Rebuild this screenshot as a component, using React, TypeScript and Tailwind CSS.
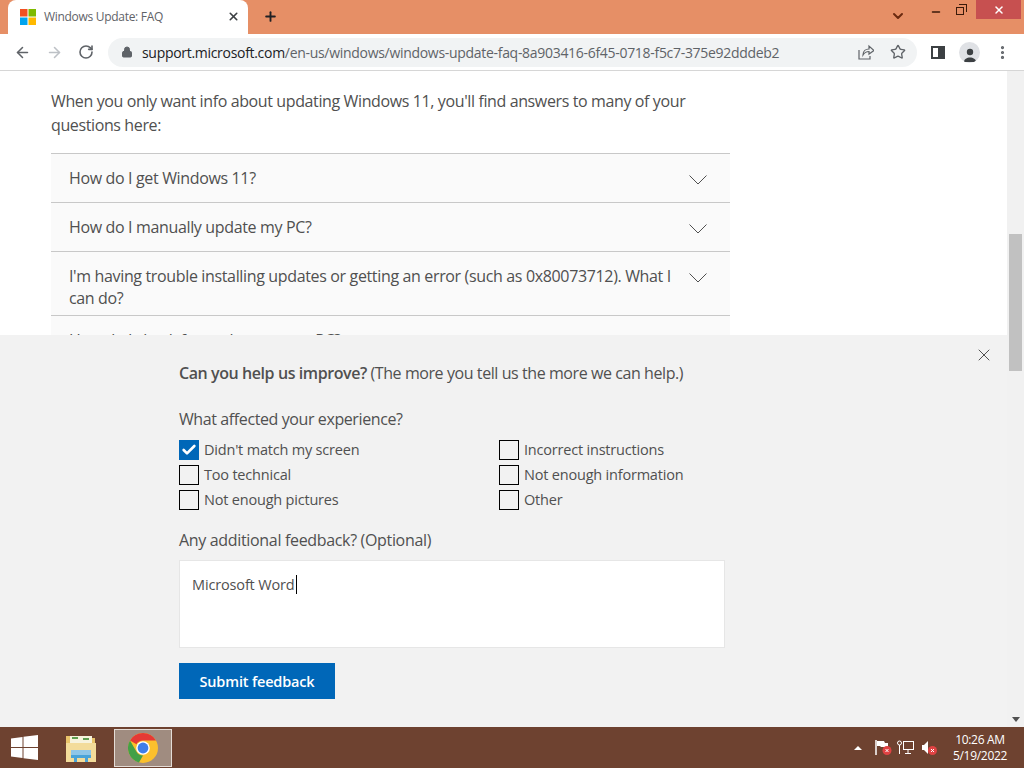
import { ArrowLeft, ArrowRight, RotateCw, Lock, Star, X, Plus, ChevronDown, MoreVertical, Check, Minus } from 'lucide-react';

const faqs = [
  "How do I get Windows 11?",
  "How do I manually update my PC?",
  "I'm having trouble installing updates or getting an error (such as 0x80073712). What I can do?",
  "How do I check for updates on my PC?",
];

const leftOptions = [
  { label: "Didn't match my screen", checked: true },
  { label: "Too technical", checked: false },
  { label: "Not enough pictures", checked: false },
];

const rightOptions = [
  { label: "Incorrect instructions", checked: false },
  { label: "Not enough information", checked: false },
  { label: "Other", checked: false },
];

const WinFlag = () => (
  <svg width="16" height="16" viewBox="0 0 16 16">
    <rect x="0" y="0" width="7.5" height="7.5" fill="#f25022" />
    <rect x="8.5" y="0" width="7.5" height="7.5" fill="#7fba00" />
    <rect x="0" y="8.5" width="7.5" height="7.5" fill="#00a4ef" />
    <rect x="8.5" y="8.5" width="7.5" height="7.5" fill="#ffb900" />
  </svg>
);

const Option = ({ label, checked }: { label: string; checked: boolean }) => (
  <div className="flex h-[25px] items-center gap-[5px]">
    {checked ? (
      <div className="flex h-5 w-5 items-center justify-center bg-[#0067b8]">
        <Check className="h-4 w-4 text-white" strokeWidth={4} />
      </div>
    ) : (
      <div className="h-5 w-5 border border-black" />
    )}
    <span className="text-[14.5px] tracking-[-0.2px] text-[#505050]">{label}</span>
  </div>
);

export default function App() {
  return (
    <div className="flex h-[768px] w-[1024px] flex-col overflow-hidden bg-white font-['Open_Sans',sans-serif]">
      {/* Tab strip */}
      <div className="flex h-[34px] shrink-0 items-end bg-[#e68f66] pl-2">
        <div className="flex h-[34px] w-[240px] items-center rounded-t-lg bg-white pl-3 pr-[8px] pb-[1px]">
          <WinFlag />
          <span className="ml-2 flex-1 text-[12px] tracking-[-0.3px] text-[#5f6368]">Windows Update: FAQ</span>
          <X className="h-[13px] w-[13px] text-[#3c4043]" strokeWidth={3} />
        </div>
        <Plus className="mb-[10px] ml-[15px] h-[15px] w-[15px] text-[#202124]" strokeWidth={3} />
        <div className="flex-1" />
        <ChevronDown className="mb-[10px] mr-[24px] h-[16px] w-[16px] text-[#6b2a10]" strokeWidth={3} />
        <div className="flex h-[34px] items-start">
          <Minus className="mt-[6px] h-[12px] w-[12px] text-[#3a1a0a]" strokeWidth={3} />
          <div className="relative ml-[14px] mt-[4px] h-[11px] w-[11px]">
            <div className="absolute bottom-0 left-0 h-[8px] w-[8px] border border-[#3a1a0a]" />
            <div className="absolute right-0 top-0 h-[8px] w-[8px] border-r border-t border-[#3a1a0a]" />
          </div>
          <div className="ml-[9px] mr-[3px] flex h-[19px] w-[45px] items-center justify-center bg-[#c75050]">
            <X className="h-3 w-3 text-white" strokeWidth={3} />
          </div>
        </div>
      </div>

      {/* Toolbar */}
      <div className="flex h-[37px] shrink-0 items-center border-b border-[#d6d6d6] bg-white pl-[14px]">
        <ArrowLeft className="h-[17px] w-[17px] text-[#5f6368]" strokeWidth={2.2} />
        <ArrowRight className="ml-[15px] h-[17px] w-[17px] text-[#bdc1c6]" strokeWidth={2.2} />
        <RotateCw className="ml-[15px] h-[16px] w-[16px] text-[#5f6368]" strokeWidth={2.4} />
        <div className="ml-[14px] flex h-[29px] w-[809px] items-center rounded-full bg-[#f1f3f4] pl-[13px]">
          <Lock className="h-[12px] w-[12px] fill-[#5f6368] text-[#5f6368]" />
          <span className="ml-[9px] flex-1 whitespace-nowrap text-[14px] tracking-[-0.3px] text-[#202124]">
            support.microsoft.com<span className="text-[#5f6368]">/en-us/windows/windows-update-faq-8a903416-6f45-0718-f5c7-375e92dddeb2</span>
          </span>
          <svg width="16" height="16" viewBox="0 0 16 16" fill="none" stroke="#5f6368" strokeWidth="1.2" className="mr-[16px]">
            <path d="M1 6v9h11v-3" />
            <path d="M5 11c0-4 3-6 6-6V2l5 4.5L11 10V7.5C8.5 7.5 6.5 8.5 5 11z" />
          </svg>
          <Star className="mr-[11px] h-[16px] w-[16px] text-[#5f6368]" strokeWidth={2} />
        </div>
        <div className="ml-[14px] flex h-[13px] w-[14px] justify-end border-2 border-[#3c4043]">
          <div className="h-full w-[5px] bg-[#3c4043]" />
        </div>
        <div className="ml-[14px] flex h-[21px] w-[21px] items-end justify-center overflow-hidden rounded-full bg-[#dfe1e5]">
          <svg width="14" height="16" viewBox="0 0 14 16" fill="#3c4043">
            <circle cx="7" cy="5" r="3.2" />
            <path d="M1 15c0-3 3-4.5 6-4.5s6 1.5 6 4.5z" />
          </svg>
        </div>
        <MoreVertical className="ml-[14px] h-[17px] w-[17px] text-[#5f6368]" strokeWidth={2.5} />
      </div>

      {/* Page and scrollbar */}
      <div className="flex min-h-0 flex-1">
        <div className="flex min-w-0 flex-1 flex-col">
          <div className="h-[264px] shrink-0 overflow-hidden pl-[51px] pt-[18px]">
            <p className="w-[670px] text-[16px] leading-[24px] tracking-[-0.38px] text-[#505050]">
              When you only want info about updating Windows 11, you'll find answers to many of your questions here:
            </p>
            <div className="mt-[16px] w-[679px] border-t border-[#c8c8c8]">
              {faqs.map((q) => (
                <div key={q} className="flex min-h-[49px] justify-between border-b border-[#c8c8c8] bg-[#fafafa] pb-[6px] pl-[18px] pr-[23px] pt-[13px]">
                  <span className="w-[610px] text-[16px] leading-[22px] tracking-[-0.35px] text-[#505050]">{q}</span>
                  <svg width="18" height="10" viewBox="0 0 18 10" fill="none" stroke="#505050" className="mt-[8px]">
                    <path d="M0.5 0.5L9 9l8.5-8.5" />
                  </svg>
                </div>
              ))}
            </div>
          </div>

          {/* Feedback panel */}
          <div className="flex min-h-0 flex-1 justify-between bg-[#f2f2f2] pl-[179px] pr-[13px] pt-[10px]">
            <div className="w-[546px] pt-[16px]">
              <p className="text-[16px] leading-[24px] tracking-[-0.42px] text-[#505050]">
                <span className="font-semibold">Can you help us improve?</span> (The more you tell us the more we can help.)
              </p>
              <p className="mt-[22px] text-[16px] leading-[24px] tracking-[-0.4px] text-[#505050]">What affected your experience?</p>
              <div className="mt-[6px] grid grid-cols-[320px_1fr]">
                <div>
                  {leftOptions.map((o) => <Option key={o.label} {...o} />)}
                </div>
                <div>
                  {rightOptions.map((o) => <Option key={o.label} {...o} />)}
                </div>
              </div>
              <p className="mt-[16px] text-[16px] leading-[24px] tracking-[-0.33px] text-[#505050]">Any additional feedback? (Optional)</p>
              <div className="mt-[8px] h-[88px] w-[546px] border border-[#e6e6e6] bg-white pl-[12px] pt-[11px]">
                <span className="border-r border-black pr-[1px] text-[14.5px] leading-[22px] tracking-[-0.15px] text-[#505050]">Microsoft Word</span>
              </div>
              <button className="mt-[15px] h-[36px] w-[156px] bg-[#0067b8] pt-[1px] text-[14.5px] font-semibold tracking-[-0.17px] text-white">Submit feedback</button>
            </div>
            <X className="h-[20px] w-[20px] text-[#505050]" strokeWidth={1.2} />
          </div>
        </div>

        {/* Scrollbar */}
        <div className="flex w-[17px] shrink-0 flex-col items-center bg-[#f1f1f1] pt-[163px]">
          <div className="h-[137px] w-[13px] bg-[#c1c1c1]" />
          <div className="flex-1" />
          <div className="mb-[5px] h-0 w-0 border-x-[4px] border-t-[5px] border-x-transparent border-t-[#505050]" />
        </div>
      </div>

      {/* Taskbar */}
      <div className="flex h-[41px] shrink-0 items-center bg-[#6e4230]">
        <svg width="27" height="25" viewBox="0 0 27 25" fill="#fff" className="ml-[11px]">
          <path d="M0 3.5L11.5 2v10H0z" />
          <path d="M12.5 1.8L27 0v12H12.5z" />
          <path d="M0 13h11.5v10L0 21.5z" />
          <path d="M12.5 13H27v12l-14.5-1.8z" />
        </svg>
        <svg width="32" height="30" viewBox="0 0 32 30" className="ml-[27px]">
          <path d="M1 3h11l2 2h16v24H1z" fill="#e9c46a" />
          <rect x="5" y="3" width="22" height="8" fill="#f7f3dc" />
          <rect x="7" y="4" width="6" height="2" fill="#5f9e50" />
          <rect x="18" y="5" width="6" height="2" fill="#5f9e50" />
          <path d="M1 10h30v19H1z" fill="#f3dc9a" />
          <rect x="6" y="17" width="20" height="5" fill="#8fc6e8" />
          <path d="M6 22h20v3h-3v4h-3v-4h-8v4H9v-4H6z" fill="#4aa3d8" />
        </svg>
        <div className="ml-[17px] flex h-[38px] w-[58px] items-center justify-center border border-[#e4dcd6] bg-[#a08c80]">
          <svg width="30" height="30" viewBox="0 0 30 30">
            <circle cx="15" cy="15" r="15" fill="#fbc02d" />
            <path d="M15 0A15 15 0 0 1 28 7.5H15A7.5 7.5 0 0 0 8.5 11.25L2 7.5A15 15 0 0 1 15 0z" fill="#e53935" />
            <path d="M2 7.5L8.5 18.75A7.5 7.5 0 0 0 15 22.5L11 29.5A15 15 0 0 1 2 7.5z" fill="#43a047" />
            <circle cx="15" cy="15" r="6.8" fill="#fff" />
            <circle cx="15" cy="15" r="5.4" fill="#3f7ee8" />
          </svg>
        </div>
        <div className="flex-1" />
        <div className="h-0 w-0 border-x-[4px] border-b-[4px] border-x-transparent border-b-white" />
        <div className="ml-[13px] flex items-center">
          <svg width="17" height="15" viewBox="0 0 17 15">
            <path d="M1 0v15" stroke="#fff" strokeWidth="1.5" />
            <path d="M2 1h7l1 2h3v4H6L5 6H2z" fill="#fff" />
            <circle cx="12" cy="10.5" r="4.5" fill="#e04343" />
            <path d="M10.5 9l3 3m0-3l-3 3" stroke="#fff" />
          </svg>
          <svg width="17" height="15" viewBox="0 0 17 15" fill="none" stroke="#fff" className="ml-[5px]">
            <rect x="6.5" y="1.5" width="10" height="8" />
            <path d="M11 10v3M8 13.5h6" />
            <circle cx="2.5" cy="3" r="2" />
            <path d="M2.5 5v9" />
          </svg>
          <svg width="17" height="15" viewBox="0 0 17 15" className="ml-[7px]">
            <path d="M1 5h2l4-4v13L3 10H1z" fill="#fff" />
            <circle cx="11.5" cy="10.5" r="4.5" fill="#e04343" />
            <path d="M10 9l3 3m0-3l-3 3" stroke="#fff" />
          </svg>
        </div>
        <div className="ml-[16px] mr-[18px] flex w-[52px] flex-col items-center text-[12px] leading-[16px] tracking-[-0.3px] text-white">
          <span>10:26 AM</span>
          <span>5/19/2022</span>
        </div>
      </div>
    </div>
  );
}
